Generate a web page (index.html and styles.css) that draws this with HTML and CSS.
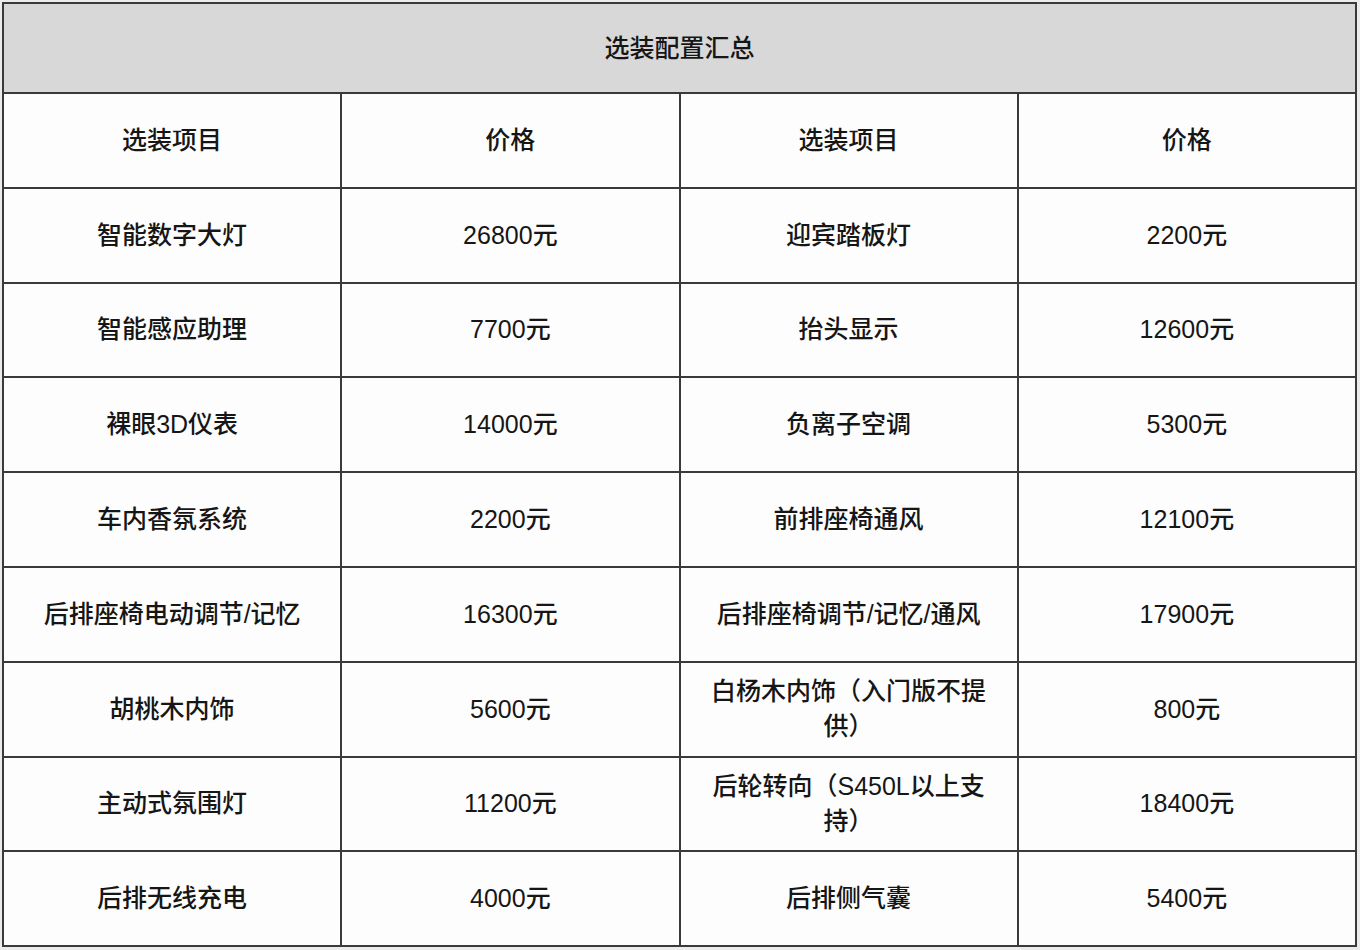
FILE: index.html
```html
<!DOCTYPE html>
<html lang="zh">
<head>
<meta charset="utf-8">
<title>选装配置汇总</title>
<link rel="stylesheet" href="styles.css">
</head>
<body>
<table class="summary">
  <colgroup><col class="c"><col class="c"><col class="c"><col class="c"></colgroup>
  <tr class="title-row"><th colspan="4">选装配置汇总</th></tr>
  <tr class="row"><td>选装项目</td><td>价格</td><td>选装项目</td><td>价格</td></tr>
  <tr class="row"><td>智能数字大灯</td><td>26800元</td><td>迎宾踏板灯</td><td>2200元</td></tr>
  <tr class="row"><td>智能感应助理</td><td>7700元</td><td>抬头显示</td><td>12600元</td></tr>
  <tr class="row"><td>裸眼3D仪表</td><td>14000元</td><td>负离子空调</td><td>5300元</td></tr>
  <tr class="row"><td>车内香氛系统</td><td>2200元</td><td>前排座椅通风</td><td>12100元</td></tr>
  <tr class="row"><td>后排座椅电动调节/记忆</td><td>16300元</td><td>后排座椅调节/记忆/通风</td><td>17900元</td></tr>
  <tr class="row"><td>胡桃木内饰</td><td>5600元</td><td>白杨木内饰（入门版不提供）</td><td>800元</td></tr>
  <tr class="row"><td>主动式氛围灯</td><td>11200元</td><td>后轮转向（S450L以上支持）</td><td>18400元</td></tr>
  <tr class="row"><td>后排无线充电</td><td>4000元</td><td>后排侧气囊</td><td>5400元</td></tr>
</table>
</body>
</html>
```
FILE: styles.css
```css
html, body {
  margin: 0;
  padding: 0;
  background: #ececec;
}
body {
  padding: 2px 0 0 2px;
  font-family: "Liberation Sans", "Noto Sans CJK SC", sans-serif;
  color: #161616;
}
.summary {
  width: 1355px;
  border-collapse: collapse;
  table-layout: fixed;
  background: #fdfdfd;
}
.summary .c {
  width: 25%;
}
.summary th,
.summary td {
  border: 2px solid #3a3a3a;
  text-align: center;
  vertical-align: middle;
  font-size: 25px;
  font-weight: 500;
  line-height: 35px;
  padding: 0 26px;
}
.title-row th {
  height: 88px;
  background: #d8d8d8;
}
.row td {
  height: 92.8px;
}
```
